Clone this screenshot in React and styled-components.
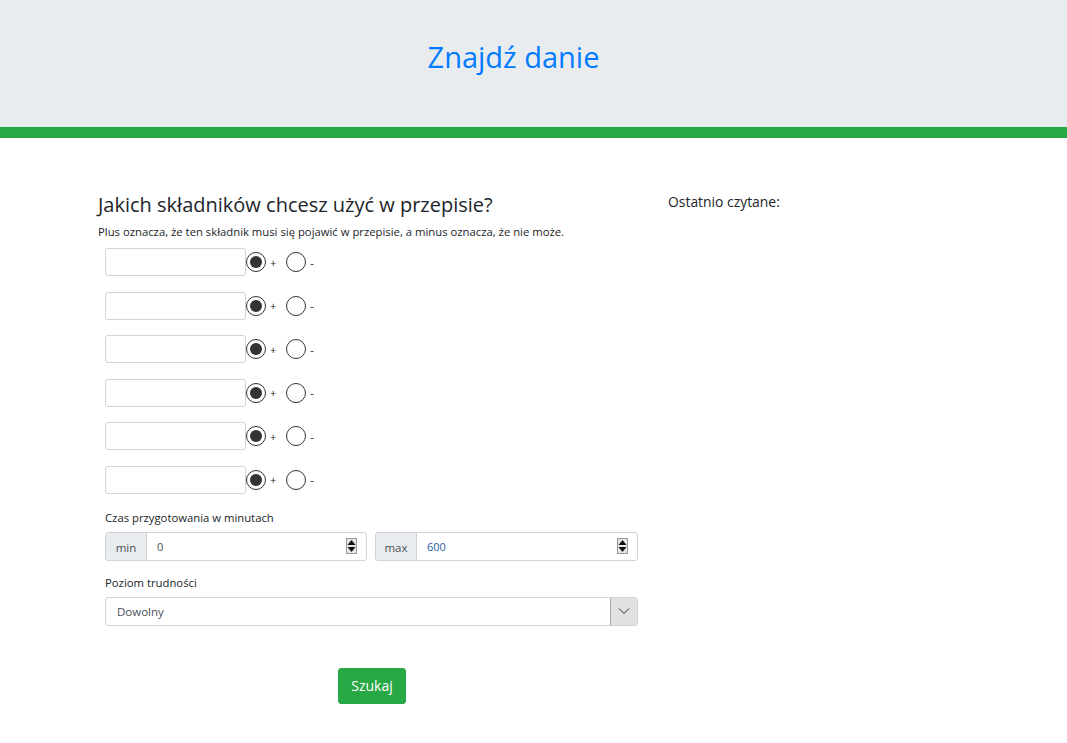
import React, { useState } from 'react';
import styled, { createGlobalStyle } from 'styled-components';

const GlobalStyle = createGlobalStyle`
  body {
    margin: 0;
    background: #fff;
    font-family: "Segoe UI", "Open Sans", "Noto Sans", sans-serif;
    color: #212529;
  }
`;

const Jumbo = styled.header`
  height: 127px;
  background: #e9ecef;
  border-bottom: 11px solid #28a745;
  display: flex;
  justify-content: center;
  align-items: center;
`;

const Title = styled.h1`
  margin: 0 40px 14px 0;
  font-size: 29px;
  font-weight: 400;
  color: #007bff;
`;

const Main = styled.main`
  display: flex;
  gap: 30px;
  padding: 53px 0 0 98px;
`;

const LeftCol = styled.section`
  width: 540px;
`;

const RightCol = styled.aside`
  padding-top: 1px;
  font-size: 13.9px;
`;

const Heading = styled.h2`
  margin: 0;
  font-size: 20px;
  font-weight: 400;
  line-height: 28px;
`;

const Hint = styled.p`
  margin: 5px 0 8px;
  font-size: 11.3px;
  line-height: 16px;
`;

const IngredientRow = styled.div`
  display: flex;
  align-items: center;
  height: 28px;
  margin: 0 0 15.6px 7px;
`;

const TextBox = styled.input`
  box-sizing: border-box;
  width: 141px;
  height: 28px;
  border: 1px solid #ced4da;
  border-radius: 3px;
  font: inherit;
  font-size: 12px;
  padding: 0 8px;
  outline: none;
`;

const Radio = styled.span`
  box-sizing: border-box;
  display: inline-flex;
  align-items: center;
  justify-content: center;
  width: 20px;
  height: 20px;
  border: 1.3px solid #333;
  border-radius: 50%;
  margin-left: ${p => p.$gap}px;
  cursor: pointer;
  &::after {
    content: '';
    display: ${p => (p.$checked ? 'block' : 'none')};
    width: 12px;
    height: 12px;
    border-radius: 50%;
    background: #333;
  }
`;

const Sign = styled.span`
  font-size: 11px;
  margin-left: 4px;
  line-height: 1;
`;

const Label = styled.div`
  font-size: 11.3px;
  margin: ${p => p.$top}px 0 ${p => p.$bottom}px 7px;
`;

const GroupRow = styled.div`
  display: flex;
  gap: 8px;
  margin-left: 7px;
`;

const InputGroup = styled.div`
  box-sizing: border-box;
  display: flex;
  width: ${p => p.$w}px;
  height: 29px;
  border: 1px solid #ced4da;
  border-radius: 3px;
  overflow: hidden;
`;

const Addon = styled.span`
  display: flex;
  align-items: center;
  justify-content: center;
  width: 40px;
  background: #e9ecef;
  border-right: 1px solid #ced4da;
  color: #495057;
  font-size: 11.5px;
  padding-top: 2px;
`;

const NumberField = styled.div`
  flex: 1;
  display: flex;
  align-items: center;
  padding: 0 9px 0 10px;
  font-size: 11px;
  color: ${p => p.$color};
`;

const Spacer = styled.span`
  flex: 1;
`;

const Select = styled.div`
  box-sizing: border-box;
  display: flex;
  align-items: center;
  width: 533px;
  height: 29px;
  margin-left: 7px;
  border: 1px solid #ced4da;
  border-radius: 3px;
  font-size: 11.5px;
  color: #495057;
  overflow: hidden;
`;

const SelectText = styled.span`
  flex: 1;
  padding-left: 11px;
`;

const SelectButton = styled.span`
  display: flex;
  align-items: center;
  justify-content: center;
  width: 26px;
  height: 100%;
  background: #e1e1e1;
  border-left: 1px solid #adadad;
`;

const ButtonRow = styled.div`
  display: flex;
  justify-content: center;
  padding: 42px 0 0 8px;
`;

const SubmitButton = styled.button`
  background: #28a745;
  border: 1px solid #28a745;
  color: #fff;
  border-radius: 3px;
  height: 36px;
  padding: 0 12px;
  font: inherit;
  font-size: 14px;
  cursor: pointer;
`;

const Spinner = () => (
  <svg width="11" height="16" viewBox="0 0 11 16">
    <rect x="0.5" y="0.5" width="10" height="15" fill="#e6e6e6" stroke="#999" />
    <path d="M5.5 2 L9.5 7 H1.5 Z" fill="#111" />
    <path d="M5.5 14 L9.5 9 H1.5 Z" fill="#111" />
  </svg>
);

const Chevron = () => (
  <svg width="12" height="8" viewBox="0 0 12 8">
    <path d="M1 1.5 L6 6.5 L11 1.5" fill="none" stroke="#333" strokeWidth="1" />
  </svg>
);

export default function App() {
  const [signs, setSigns] = useState([true, true, true, true, true, true]);

  const toggle = (i, val) =>
    setSigns(s => s.map((v, idx) => (idx === i ? val : v)));

  return (
    <>
      <GlobalStyle />
      <Jumbo>
        <Title>Znajdź danie</Title>
      </Jumbo>
      <Main>
        <LeftCol>
          <Heading>Jakich składników chcesz użyć w przepisie?</Heading>
          <Hint>Plus oznacza, że ten składnik musi się pojawić w przepisie, a minus oznacza, że nie może.</Hint>
          {signs.map((plus, i) => (
            <IngredientRow key={i}>
              <TextBox />
              <Radio $gap={0} $checked={plus} onClick={() => toggle(i, true)} />
              <Sign>+</Sign>
              <Radio $gap={10} $checked={!plus} onClick={() => toggle(i, false)} />
              <Sign>-</Sign>
            </IngredientRow>
          ))}
          <Label $top={3} $bottom={7}>Czas przygotowania w minutach</Label>
          <GroupRow>
            <InputGroup $w={262}>
              <Addon>min</Addon>
              <NumberField $color="#495057">
                0<Spacer />
                <Spinner />
              </NumberField>
            </InputGroup>
            <InputGroup $w={263}>
              <Addon>max</Addon>
              <NumberField $color="#2a5d9f">
                600<Spacer />
                <Spinner />
              </NumberField>
            </InputGroup>
          </GroupRow>
          <Label $top={14} $bottom={7}>Poziom trudności</Label>
          <Select>
            <SelectText>Dowolny</SelectText>
            <SelectButton>
              <Chevron />
            </SelectButton>
          </Select>
          <ButtonRow>
            <SubmitButton>Szukaj</SubmitButton>
          </ButtonRow>
        </LeftCol>
        <RightCol>Ostatnio czytane:</RightCol>
      </Main>
    </>
  );
}
